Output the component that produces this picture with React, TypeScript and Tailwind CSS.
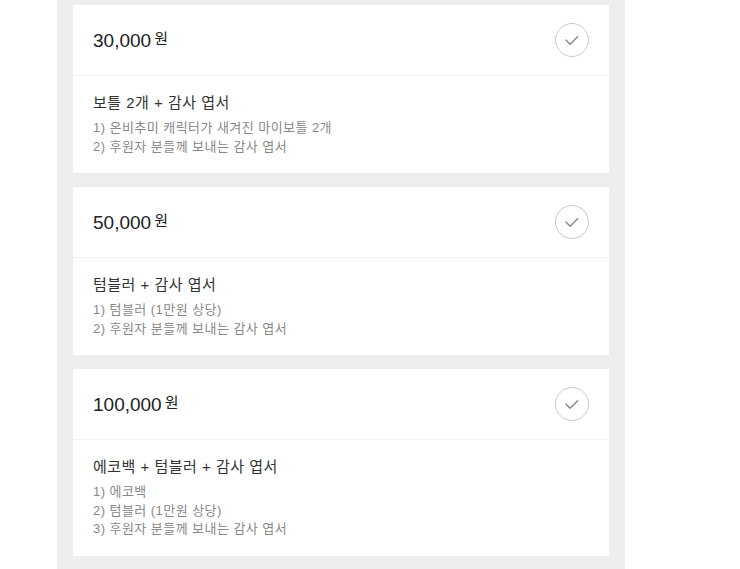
import React from "react";

type Reward = {
  price: string;
  title: string;
  items: string[];
};

const rewards: Reward[] = [
  {
    price: "30,000",
    title: "보틀 2개 + 감사 엽서",
    items: ["1) 온비추미 캐릭터가 새겨진 마이보틀 2개", "2) 후원자 분들께 보내는 감사 엽서"],
  },
  {
    price: "50,000",
    title: "텀블러 + 감사 엽서",
    items: ["1) 텀블러 (1만원 상당)", "2) 후원자 분들께 보내는 감사 엽서"],
  },
  {
    price: "100,000",
    title: "에코백 + 텀블러 + 감사 엽서",
    items: ["1) 에코백", "2) 텀블러 (1만원 상당)", "3) 후원자 분들께 보내는 감사 엽서"],
  },
];

const CheckCircle = () => (
  <div className="w-[34px] h-[34px] rounded-full border border-[#c9c9c9] flex items-center justify-center">
    <svg width="34" height="34" viewBox="0 0 34 34" fill="none">
      <polyline
        points="10.5,17 15,21.5 23,13.5"
        stroke="#858585"
        strokeWidth="1.4"
        strokeLinecap="round"
        strokeLinejoin="round"
      />
    </svg>
  </div>
);

const RewardCard = ({ reward }: { reward: Reward }) => (
  <div className="bg-white">
    <div className="h-[71px] flex items-center justify-between pl-5 pr-5 border-b border-[#f1f1f1]">
      <div className="flex items-start text-[#222] mt-[1px]">
        <span className="text-[19px] leading-[24px]">{reward.price}</span>
        <span className="text-[15px] leading-[20px] ml-[3px]">원</span>
      </div>
      <CheckCircle />
    </div>
    <div className="pl-5 pr-5 pt-[17px] pb-[17px]">
      <p className="text-[15px] leading-[20px] text-[#333] mb-[6px] tracking-[0.5px]">{reward.title}</p>
      {reward.items.map((item) => (
        <p key={item} className="text-[13px] leading-[18.5px] text-[#888] tracking-[0.45px]">
          {item}
        </p>
      ))}
    </div>
  </div>
);

const App = () => {
  return (
    <div
      className="w-[740px] h-[569px] bg-white overflow-hidden"
      style={{ fontFamily: '"Liberation Sans", "Noto Sans CJK KR", sans-serif' }}
    >
      <div className="ml-[57px] w-[568px] min-h-[569px] bg-[#eeeeee] px-4 pt-[5px] flex flex-col gap-[14px]">
        {rewards.map((r) => (
          <RewardCard key={r.price} reward={r} />
        ))}
      </div>
    </div>
  );
};

export default App;
